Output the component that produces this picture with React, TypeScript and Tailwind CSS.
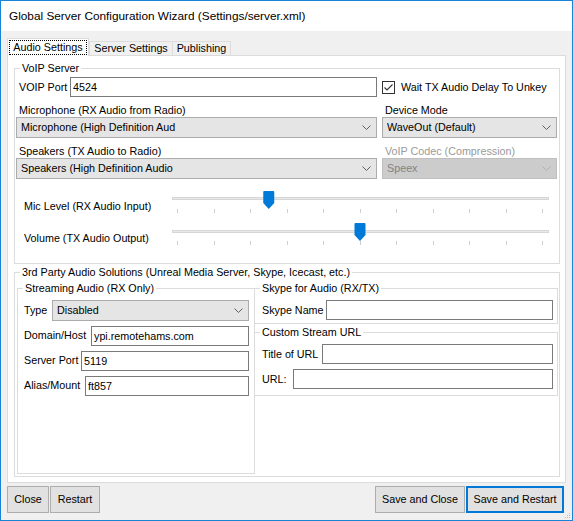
import clsx from 'clsx'

function Chevron({ disabled }: { disabled?: boolean }) {
  return (
    <svg width="9" height="5" viewBox="0 0 9 5" className="shrink-0">
      <path d="M0.5 0.5 L4.5 4.5 L8.5 0.5" fill="none" stroke={disabled ? '#b0b0b0' : '#606060'} />
    </svg>
  )
}

function Combo({ value, disabled, className }: { value: string; disabled?: boolean; className?: string }) {
  return (
    <div
      className={clsx(
        'flex h-[21px] items-center border pl-[4px] pr-[5px]',
        disabled ? 'border-[#bfbfbf] bg-[#cccccc] text-[#838383]' : 'border-[#acacac] bg-[#e5e5e5]',
        className,
      )}
    >
      <span className="flex-1 truncate">{value}</span>
      <Chevron disabled={disabled} />
    </div>
  )
}

function TextBox({ value = '', className }: { value?: string; className?: string }) {
  return (
    <input
      readOnly
      value={value}
      className={clsx('h-[20px] border border-[#7a7a7a] bg-white pl-[2px] outline-none', className)}
    />
  )
}

function CheckBox({ className }: { className?: string }) {
  return (
    <svg width="13" height="13" viewBox="0 0 13 13" className={clsx('shrink-0', className)}>
      <rect x="0.5" y="0.5" width="12" height="12" fill="#fff" stroke="#333" />
      <path d="M2.5 6.5 L5 9 L10.5 3.5" fill="none" stroke="#333" strokeWidth="1.1" />
    </svg>
  )
}

function TrackBar({ value, trackY }: { value: number; trackY: number }) {
  const ticks = Array.from({ length: 11 }, (_, i) => Math.round(9 + i * 36.5) + 0.5)
  const cx = 9.5 + value * 36.5
  return (
    <svg width="386" height="32" viewBox="0 0 386 32" className="shrink-0">
      <rect x="4.5" y={trackY + 0.5} width="376" height="2" fill="#e7eaea" stroke="#d6d6d6" />
      {ticks.map((x) => (
        <line key={x} x1={x} y1="21" x2={x} y2="25" stroke="#cfcfcf" />
      ))}
      <path
        d={`M${cx - 5.5} 4 Q${cx - 5.5} 3 ${cx - 4.5} 3 H${cx + 4.5} Q${cx + 5.5} 3 ${cx + 5.5} 4 V15 L${cx} 21 L${cx - 5.5} 15 Z`}
        fill="#007ad9"
      />
    </svg>
  )
}

function SliderRow({ label, value, trackY }: { label: string; value: number; trackY: number }) {
  return (
    <div className="flex h-[32px]">
      <span className="ml-[9px] mt-[12px] w-[144px] shrink-0">{label}</span>
      <TrackBar value={value} trackY={trackY} />
    </div>
  )
}

function Field({ label, labelWidth, children, className }: { label: string; labelWidth: string; children: React.ReactNode; className?: string }) {
  return (
    <div className={clsx('flex items-center', className)}>
      <span className={clsx('shrink-0', labelWidth)}>{label}</span>
      {children}
    </div>
  )
}

function Button({ children, primary, className }: { children: React.ReactNode; primary?: boolean; className?: string }) {
  return (
    <button
      type="button"
      className={clsx(
        'h-[27px] bg-[#e1e1e1] text-center',
        primary ? 'border-2 border-[#0078d7]' : 'border border-[#adadad]',
        className,
      )}
    >
      {children}
    </button>
  )
}

export default function App() {
  return (
    <div className="relative flex h-[521px] w-[573px] flex-col border border-[#1883d7] bg-[#f0f0f0] font-['Liberation_Sans',Arial,sans-serif] text-[10.75px] leading-[13px] text-black">
      <div className="flex h-[30px] shrink-0 items-center bg-white pl-[8px] text-[11.8px]">
        Global Server Configuration Wizard (Settings/server.xml)
      </div>

      <div className="flex flex-1 flex-col px-[6px]">
        {/* tabs */}
        <div className="relative z-10 -mb-px mt-[7px] flex h-[18px] items-end">
          <div className="flex h-[18px] w-[82px] items-center justify-center border-x border-t border-[#dcdcdc] bg-white">
            <span className="border border-dotted border-black px-[3px]">Audio Settings</span>
          </div>
          <div className="mb-px flex h-[14px] w-[84px] items-center justify-center border-x border-t border-[#dcdcdc]">
            Server Settings
          </div>
          <div className="mb-px flex h-[14px] w-[58px] items-center justify-center border-r border-t border-[#dcdcdc]">
            Publishing
          </div>
        </div>

        {/* tab page */}
        <div className="h-[428px] border border-[#dcdcdc] bg-white">
          <fieldset className="ml-[6px] mt-[6px] w-[546px] border border-[#dcdcdc] pb-[11px]">
            <legend className="ml-[5px] px-[2px]">VoIP Server</legend>
            <div className="mt-[2px] flex h-[20px] items-center">
              <span className="ml-[4px] w-[51px] shrink-0">VOIP Port</span>
              <TextBox value="4524" className="w-[307px]" />
              <CheckBox className="ml-[5px]" />
              <span className="ml-[6px]">Wait TX Audio Delay To Unkey</span>
            </div>
            <div className="flex">
              <div className="ml-[1px] w-[361px]">
                <div className="mt-[7px] h-[13px] pl-[3px]">Microphone (RX Audio from Radio)</div>
                <Combo value="Microphone (High Definition Aud" />
                <div className="mt-[7px] h-[13px] pl-[3px]">Speakers (TX Audio to Radio)</div>
                <Combo value="Speakers (High Definition Audio" />
              </div>
              <div className="ml-[5px] w-[175px]">
                <div className="mt-[7px] h-[13px] pl-[3px]">Device Mode</div>
                <Combo value="WaveOut (Default)" />
                <div className="mt-[7px] h-[13px] pl-[3px] text-[#9a9a9a]">VoIP Codec (Compression)</div>
                <Combo value="Speex" disabled />
              </div>
            </div>
            <div className="mt-[9px]">
              <SliderRow label="Mic Level (RX Audio Input)" value={2.5} trackY={9} />
              <SliderRow label="Volume (TX Audio Output)" value={5} trackY={10} />
            </div>
          </fieldset>

          <fieldset className="ml-[6px] mt-[2px] w-[546px] border border-[#dcdcdc] pb-[2px]">
            <legend className="ml-[5px] px-[2px]">3rd Party Audio Solutions (Unreal Media Server, Skype, Icecast, etc.)</legend>
            <div className="flex items-start">
              <fieldset className="ml-[2px] mt-[3px] h-[192px] w-[238px] border border-[#dcdcdc]">
                <legend className="ml-[5px] px-[2px]">Streaming Audio (RX Only)</legend>
                <Field label="Type" labelWidth="w-[28px]" className="ml-[6px] mr-[5px] mt-[5px] h-[21px]">
                  <Combo value="Disabled" className="flex-1" />
                </Field>
                <Field label="Domain/Host" labelWidth="w-[67px]" className="ml-[6px] mr-[5px] mt-[4px] h-[21px]">
                  <TextBox value="ypi.remotehams.com" className="min-w-0 flex-1" />
                </Field>
                <Field label="Server Port" labelWidth="w-[57px]" className="ml-[6px] mr-[5px] mt-[4px] h-[21px]">
                  <TextBox value="5119" className="min-w-0 flex-1" />
                </Field>
                <Field label="Alias/Mount" labelWidth="w-[61px]" className="ml-[6px] mr-[5px] mt-[4px] h-[21px]">
                  <TextBox value="ft857" className="min-w-0 flex-1" />
                </Field>
              </fieldset>

              <div className="-ml-px mt-[3px] w-[304px]">
                <fieldset className="border border-[#dcdcdc] pb-[3px]">
                  <legend className="ml-[5px] px-[2px]">Skype for Audio (RX/TX)</legend>
                  <Field label="Skype Name" labelWidth="w-[64px]" className="ml-[7px] mr-[4px] mt-[5px] h-[20px]">
                    <TextBox className="min-w-0 flex-1" />
                  </Field>
                </fieldset>
                <fieldset className="mt-[2px] border border-[#dcdcdc] pb-[6px]">
                  <legend className="ml-[5px] px-[2px]">Custom Stream URL</legend>
                  <Field label="Title of URL" labelWidth="w-[60px]" className="ml-[7px] mr-[4px] mt-[5px] h-[20px]">
                    <TextBox className="min-w-0 flex-1" />
                  </Field>
                  <Field label="URL:" labelWidth="w-[31px]" className="ml-[7px] mr-[4px] mt-[5px] h-[20px]">
                    <TextBox className="min-w-0 flex-1" />
                  </Field>
                </fieldset>
              </div>
            </div>
          </fieldset>
        </div>

        {/* buttons */}
        <div className="mt-[3px] flex h-[27px]">
          <Button className="w-[42px]">Close</Button>
          <Button className="ml-[1px] w-[50px]">Restart</Button>
          <Button className="ml-auto w-[90px]">Save and Close</Button>
          <Button primary className="ml-[1px] mr-[2px] w-[98px]">Save and Restart</Button>
        </div>
      </div>

      <svg width="6" height="6" viewBox="0 0 6 6" className="absolute bottom-[1px] right-[1px]">
        <rect x="4" y="0" width="1" height="1" fill="#bcbcbc" />
        <rect x="2" y="2" width="1" height="1" fill="#bcbcbc" />
        <rect x="4" y="2" width="1" height="1" fill="#bcbcbc" />
        <rect x="0" y="4" width="1" height="1" fill="#bcbcbc" />
        <rect x="2" y="4" width="1" height="1" fill="#bcbcbc" />
        <rect x="4" y="4" width="1" height="1" fill="#bcbcbc" />
      </svg>
    </div>
  )
}
